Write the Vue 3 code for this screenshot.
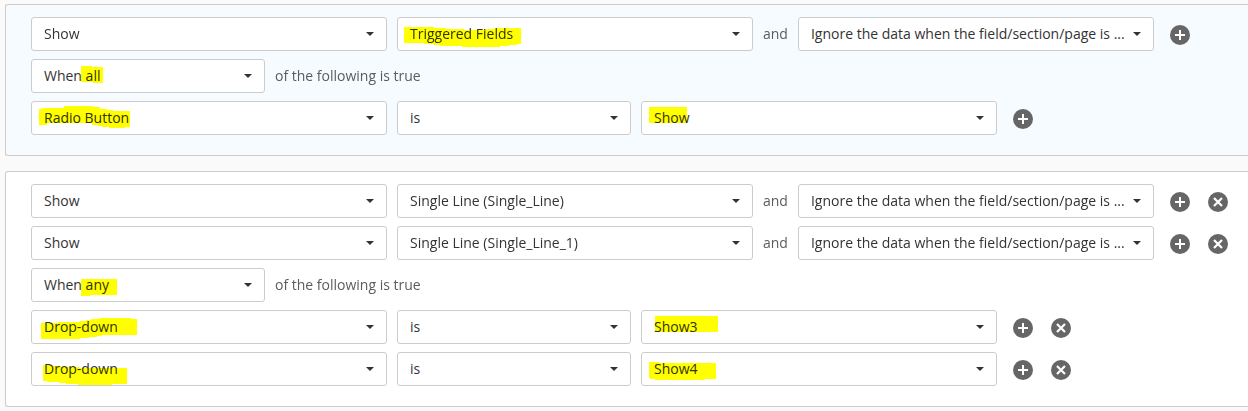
<template>
  <div class="rules">
    <section
      v-for="(rule, index) in rules"
      :key="index"
      class="rule"
      :class="{ 'rule-active': rule.active }">
      <div v-for="(row, rowIndex) in rule.rows" :key="rowIndex" class="rule-row">
        <template v-for="(item, itemIndex) in row.items" :key="itemIndex">
          <span v-if="item.text" class="rule-text">{{ item.text }}</span>
          <div v-else class="select" :class="{ 'select-small': item.small }">
            <span class="select-label">{{ item.value }}</span>
            <span class="caret"></span>
            <svg v-if="item.mark" class="mark" width="150" height="34" shape-rendering="crispEdges">
              <polygon :points="item.mark" fill="#ffff00" />
            </svg>
          </div>
        </template>
        <div v-if="row.add" class="actions">
          <button type="button" aria-label="Add">
            <svg width="20" height="20" viewBox="0 0 20 20">
              <circle cx="10" cy="10" r="10" fill="#666" />
              <path d="M10 5v10M5 10h10" stroke="#fff" stroke-width="2" />
            </svg>
          </button>
          <button v-if="row.remove" type="button" aria-label="Remove">
            <svg width="20" height="20" viewBox="0 0 20 20">
              <circle cx="10" cy="10" r="10" fill="#666" />
              <path d="M6 6l8 8M14 6l-8 8" stroke="#fff" stroke-width="2.2" />
            </svg>
          </button>
        </div>
      </div>
    </section>
  </div>
</template>

<script setup>
import { ref } from 'vue'

const ignoreText = 'Ignore the data when the field/section/page is ...'

// highlighter strokes, in coordinates of the select box
const marks = {
  triggered: '7,10 37,10 37,11 49,11 49,12 67,12 67,13 87,13 87,12 98,12 98,11 124,11 124,27 120,27 120,28 112,28 112,29 103,29 103,30 65,30 65,29 43,29 43,28 37,28 37,27 27,27 27,26 7,26',
  all: '50,7 61,7 61,8 72,8 72,24 62,24 62,23 50,23',
  radio: '8,8 12,8 12,7 33,7 33,5 62,5 62,6 69,6 69,8 76,8 76,9 82,9 82,10 99,10 99,26 94,26 94,27 78,27 78,26 71,26 71,25 67,25 67,24 61,24 61,22 16,22 16,24 8,24',
  show: '8,6 46,6 46,22 8,22',
  any: '50,11 86,11 86,27 59,27 59,28 50,28',
  dropdown1: '10,13 27,13 27,12 49,12 49,11 55,11 55,10 60,10 60,9 68,9 68,8 100,8 100,9 106,9 106,25 71,25 71,26 66,26 66,27 58,27 58,28 49,28 49,29 10,29',
  dropdown2: '12,13 19,13 19,14 30,14 30,15 48,15 48,16 96,16 96,32 81,32 81,33 47,33 47,32 35,32 35,31 28,31 28,30 16,30 16,29 12,29',
  show3: '14,6 77,6 77,22 14,22',
  show4: '8,10 18,10 18,11 75,11 75,27 63,27 63,28 14,28 14,27 9,27 9,26 8,26'
}

const rules = ref([
  {
    active: true,
    rows: [
      {
        items: [
          { value: 'Show' },
          { value: 'Triggered Fields', mark: marks.triggered },
          { text: 'and' },
          { value: ignoreText }
        ],
        add: true
      },
      {
        items: [
          { value: 'When all', small: true, mark: marks.all },
          { text: 'of the following is true' }
        ]
      },
      {
        items: [
          { value: 'Radio Button', mark: marks.radio },
          { value: 'is', small: true },
          { value: 'Show', mark: marks.show }
        ],
        add: true
      }
    ]
  },
  {
    active: false,
    rows: [
      {
        items: [
          { value: 'Show' },
          { value: 'Single Line (Single_Line)' },
          { text: 'and' },
          { value: ignoreText }
        ],
        add: true,
        remove: true
      },
      {
        items: [
          { value: 'Show' },
          { value: 'Single Line (Single_Line_1)' },
          { text: 'and' },
          { value: ignoreText }
        ],
        add: true,
        remove: true
      },
      {
        items: [
          { value: 'When any', small: true, mark: marks.any },
          { text: 'of the following is true' }
        ]
      },
      {
        items: [
          { value: 'Drop-down', mark: marks.dropdown1 },
          { value: 'is', small: true },
          { value: 'Show3', mark: marks.show3 }
        ],
        add: true,
        remove: true
      },
      {
        items: [
          { value: 'Drop-down', mark: marks.dropdown2 },
          { value: 'is', small: true },
          { value: 'Show4', mark: marks.show4 }
        ],
        add: true,
        remove: true
      }
    ]
  }
])
</script>

<style>
body {
  background: #fafafa;
}
</style>

<style scoped>
.rules {
  box-sizing: border-box;
  height: 411px;
  padding: 4px 0 0 5px;
  overflow: hidden;
  display: flex;
  flex-direction: column;
  gap: 15px;
  background: #fafafa;
  color: #333;
  font-family: "Open Sans", sans-serif;
  font-size: 14px;
}

.rule {
  display: flex;
  flex-direction: column;
  gap: 8px;
  padding: 12px 25px 20px;
  border: 1px solid #ccc;
  border-right: 0;
  border-radius: 3px 0 0 3px;
  background: #fff;
}

.rule-active {
  background: #f5fbff;
}

.rule-row {
  display: flex;
  align-items: center;
  gap: 10px;
  height: 34px;
}

.rule-text {
  flex: none;
  color: #5c5c5c;
  line-height: 34px;
  white-space: nowrap;
}

.select {
  box-sizing: border-box;
  position: relative;
  display: flex;
  flex: none;
  align-items: center;
  justify-content: space-between;
  width: 356px;
  height: 34px;
  padding: 0 12px;
  border: 1px solid #ccc;
  border-radius: 3px;
  background: #fff;
}

.select-small {
  width: 234px;
}

.select-label {
  line-height: 32px;
  white-space: nowrap;
}

.caret {
  flex: none;
  border: 4px solid transparent;
  border-top-color: #333;
  border-bottom: 0;
}

.mark {
  position: absolute;
  top: -1px;
  left: -1px;
  mix-blend-mode: multiply;
  pointer-events: none;
}

.actions {
  display: flex;
  gap: 18px;
  padding: 2px 0 0 6px;
}

.actions button {
  display: block;
  width: 20px;
  height: 20px;
  padding: 0;
  border: 0;
  background: none;
  cursor: pointer;
}

.actions svg {
  display: block;
}
</style>
